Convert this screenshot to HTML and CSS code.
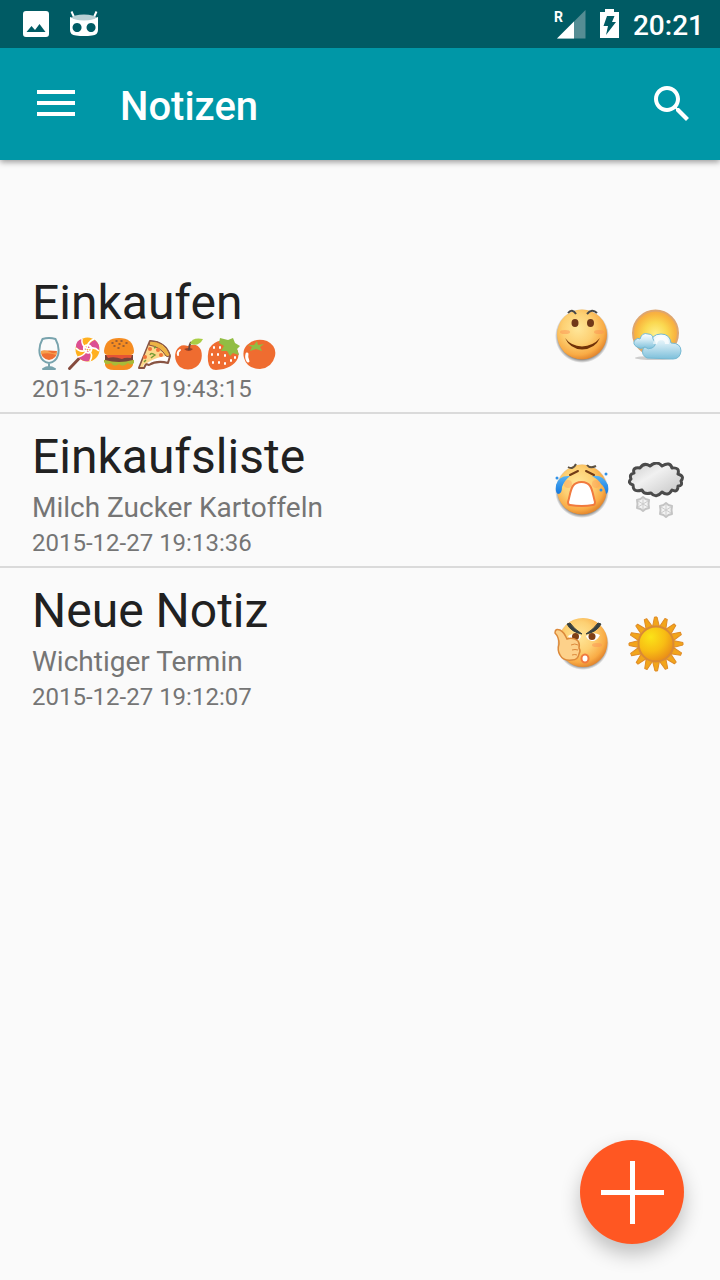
FILE: index.html
```html
<!DOCTYPE html>
<html lang="de">
<head>
  <meta charset="UTF-8" />
  <meta name="viewport" content="width=device-width, initial-scale=1.0" />
  <title>Notizen</title>
  <link rel="stylesheet" href="styles.css">
</head>
<body>
  <!-- gradients shared by the icons -->
  <svg class="defs" width="0" height="0" aria-hidden="true">
    <defs>
      <radialGradient id="face" cx="42%" cy="38%" r="62%">
        <stop offset="0" stop-color="#ffe79a" />
        <stop offset="0.5" stop-color="#fdd073" />
        <stop offset="0.85" stop-color="#f9ab45" />
        <stop offset="1" stop-color="#e58a30" />
      </radialGradient>
      <radialGradient id="softSun" cx="50%" cy="52%" r="52%">
        <stop offset="0" stop-color="#fff08a" />
        <stop offset="0.5" stop-color="#fad850" />
        <stop offset="0.84" stop-color="#f9b53e" />
        <stop offset="1" stop-color="#f3a84c" />
      </radialGradient>
      <radialGradient id="brightSun" cx="35%" cy="30%" r="75%">
        <stop offset="0" stop-color="#fbe318" />
        <stop offset="0.55" stop-color="#f8bd14" />
        <stop offset="1" stop-color="#e98a18" />
      </radialGradient>
      <linearGradient id="cloud" x1="0" y1="0" x2="0" y2="1">
        <stop offset="0" stop-color="#ffffff" />
        <stop offset="0.4" stop-color="#d3ebf5" />
        <stop offset="1" stop-color="#7cbfda" />
      </linearGradient>
      <linearGradient id="greyCloud" x1="0" y1="0" x2="1" y2="1">
        <stop offset="0" stop-color="#cccccc" />
        <stop offset="0.4" stop-color="#f1f1f1" />
        <stop offset="1" stop-color="#c2c2c2" />
      </linearGradient>
      <linearGradient id="tear" x1="0" y1="0" x2="0" y2="1">
        <stop offset="0" stop-color="#55b4f5" />
        <stop offset="1" stop-color="#1578df" />
      </linearGradient>
      <radialGradient id="shade">
        <stop offset="0.85" stop-color="#000" stop-opacity="0.5" />
        <stop offset="1" stop-color="#000" stop-opacity="0" />
      </radialGradient>
      <g id="flake">
        <path d="M0-7 2.500-5 6-4 5.500 0 6 4 2.500 5 0 7-2.500 5-6 4-5.500 0-6-4-2.500-5z" fill="#f2f2f2" stroke="#c4c4c4" stroke-width="2" stroke-linejoin="round" />
        <path d="M0-6V6M-5-3 5 3M5-3-5 3" fill="none" stroke="#cccccc" />
      </g>
      <path id="ray" d="M24.500 11 26.500 1H29L31.500 11z" />
    </defs>
  </svg>

  <header>
    <div class="status">
      <div class="status-group">
        <svg width="26" height="26" viewBox="0 0 26 26"><path fill="#fff" fill-rule="evenodd" d="M3 0H23Q26 0 26 3V23Q26 26 23 26H3Q0 26 0 23V3Q0 0 3 0zM3.500 21H22.500L16.500 13 12 19 8.500 15z" /></svg>
        <svg width="28" height="26" viewBox="0 0 28 26">
          <path d="M1.500.5 4 6M26.500.5 24 6" stroke="#fff" stroke-width="2" />
          <path fill="#fff" fill-rule="evenodd" d="M0 6Q14 12 28 6V19Q28 24 22 24.500Q14 25.500 6 24.500Q0 24 0 19zM7 12a4.500 4.500 0 1 0 .1 0zM21 12a4.500 4.500 0 1 0 .1 0z" />
          <ellipse cx="14" cy="6.500" rx="12" ry="3" fill="#b9d0d4" />
        </svg>
      </div>
      <div class="status-group status-right">
        <svg width="32" height="30" viewBox="0 0 32 30">
          <path d="M31.500 1V29.500H3z" fill="#558d94" />
          <path d="M20 12.500V29.500H3z" fill="#fff" />
          <text class="roaming" x="0" y="13">R</text>
        </svg>
        <svg width="19" height="30" viewBox="0 0 19 30">
          <path d="M5 0H14V3H19V29H0V3H5z" fill="#fff" />
          <path d="M7 7H14.500L12 13H16L6 26 8 17H3.500z" fill="#005b64" />
        </svg>
        <time>20:21</time>
      </div>
    </div>
    <div class="toolbar">
      <button class="icon-button" aria-label="Menü">
        <svg width="48" height="48" viewBox="0 0 48 48"><path d="M5 12H43M5 23H43M5 34H43" stroke="#fff" stroke-width="4" /></svg>
      </button>
      <h1>Notizen</h1>
      <button class="icon-button" aria-label="Suchen">
        <svg width="48" height="48" viewBox="0 0 24 24"><path fill="#fff" d="M15.500 14h-.79l-.28-.27C15.410 12.590 16 11.110 16 9.500 16 5.910 13.090 3 9.500 3S3 5.910 3 9.500 5.910 16 9.500 16c1.610 0 3.090-.59 4.230-1.570l.27.28v.79l5 4.990L20.490 19l-4.990-5zm-6 0C7.010 14 5 11.990 5 9.500S7.010 5 9.500 5 14 7.010 14 9.500 11.990 14 9.500 14z" /></svg>
      </button>
    </div>
  </header>

  <main>
    <ul class="notes">
      <li>
        <a class="note" href="#einkaufen">
          <div class="note-text">
            <h2>Einkaufen</h2>
            <div class="preview emojis">
              <!-- wine glass -->
              <svg viewBox="0 0 35 34">
                <path d="M9 14Q17 13 25 14Q25 22 17 23Q9 22 9 14z" fill="#ef7033" />
                <path d="M9 14Q13 12 18 15T25 14L24 18Q17 15 9 17z" fill="#f7a04e" />
                <path d="M10.500 2Q6 10 8 18Q10 25 17 26Q24 25 26 18Q28 10 23.500 2Q17 0 10.500 2zM17 26V31M11 32Q17 28 23 32z" fill="none" stroke="#78a3ad" stroke-width="2" stroke-linejoin="round" />
              </svg>
              <!-- lollipop -->
              <svg viewBox="0 0 35 34">
                <path d="M2.500 31.500 13 20.500" stroke="#854b3d" stroke-width="3" stroke-linecap="round" />
                <circle cx="20.500" cy="12.500" r="12" fill="#ffb01f" />
                <path d="M20 12Q22 5 28 3Q33 7 32 13Q26 10 20 12zM21 13Q25 18 22 24Q15 25 11 20Q18 19 21 13zM20 13Q13 14 9 10Q9 3 15 2Q15 9 20 13z" fill="#dc4f93" />
                <g fill="none" stroke="#fff" stroke-width="1.500">
                  <path d="M20 12Q20 5 27 2M21 12Q27 9 32 14M21 13Q27 17 23 24M20 13Q17 19 11 20M20 13Q13 16 9 11M20 12Q14 8 15 2" />
                  <path d="M17 13Q16 8 21 8Q26 10 24 14Q22 17 19 15" stroke-width="2" />
                </g>
              </svg>
              <!-- burger -->
              <svg viewBox="0 0 35 34">
                <path d="M3 24H31V28Q29 33 22 33H12Q4 33 3 28z" fill="#f58c21" />
                <path d="M2 23Q17 19 32 23L32 26Q29 29 26 26Q21 31 17 27Q12 31 9 26Q4 29 2 25z" fill="#a9ba38" />
                <path d="M3 18H31V23Q17 27 3 23z" fill="#76443a" />
                <path d="M4 18 30 18 29 21Q23 20 20 22Q12 19 6 21z" fill="#e55435" />
                <path d="M2 14Q3 1 17 1Q31 1 32 14Q32 18 28 18H6Q2 18 2 14z" fill="#f58c21" />
                <path d="M10 6h1M14 4h1M19 4h1M24 6h1M12 9h1M17 7h1M21 9h1M16 11h1" stroke="#80503a" stroke-width="1.500" stroke-linecap="round" />
              </svg>
              <!-- pizza -->
              <svg viewBox="0 0 35 34">
                <path d="M2 31 13 4Q29 5 33 19L31 26Q20 23 12 28L9 27 7 31z" fill="#fff" stroke="#885443" stroke-width="2" stroke-linejoin="round" />
                <path d="M3 30 13 5Q24 8 30 19Q19 20 10 26L7 27 6 30z" fill="#fdd789" />
                <path d="M13 4Q28 4 33 18Q31 21 29 19Q24 10 12 8z" fill="#edb345" stroke="#885443" stroke-width="1" />
                <g fill="#f17339"><circle cx="13" cy="12" r="2" /><circle cx="21" cy="13" r="2" /><circle cx="8" cy="20" r="2" /><circle cx="24" cy="18" r="2" /></g>
                <path d="M13 18Q14 15 18 18Q15 20 14 21M17 11l2-1M7 25l2-2" fill="none" stroke="#769c35" stroke-width="1.500" />
              </svg>
              <!-- apple -->
              <svg viewBox="0 0 35 34">
                <path d="M16 9Q25 5 29 13Q32 24 24 30Q16 35 8 30Q1 23 4 14Q8 6 16 9z" fill="#ef6c30" />
                <path d="M12 12Q17 16 21 12Q17 10 12 12z" fill="#994126" />
                <path d="M17 13Q17 8 19 5" fill="none" stroke="#67473d" stroke-width="2" />
                <path d="M18 7Q20 0 31 2Q27 10 18 7z" fill="#a9ce45" />
                <path d="M8 13Q5 15 6 18" fill="none" stroke="#fff" stroke-width="2" stroke-linecap="round" />
              </svg>
              <!-- strawberry -->
              <svg viewBox="0 0 35 34">
                <path d="M5 8Q13 1 23 5Q34 13 31 21Q26 32 9 33Q2 33 1 24Q0 12 5 8z" fill="#ef6c30" />
                <path d="M13 1 21 3 26 1 28 6 33 9 30 12 32 18 26 16 23 19 20 14 14 14 17 9 12 6z" fill="#91bd43" />
                <path d="M7 10v1M13 10v1M5 17v1M11 17v1M18 18v1M6 25v1M12 25v1M18 26v1M24 23v1M28 20v1" stroke="#fff" stroke-width="2" stroke-linecap="round" />
              </svg>
              <!-- tomato -->
              <svg viewBox="0 0 35 34">
                <path d="M5 8Q14 0 25 4Q35 9 33 19Q30 31 18 32Q5 32 2 21Q0 13 5 8z" fill="#ef6c30" />
                <path d="M6 8 12 8 15 4 16 8 22 7 18 10 20 14 14 12 8 14 10 10z" fill="#91bd43" />
                <path d="M5 17Q4 21 6 24" fill="none" stroke="#fff" stroke-width="3" stroke-linecap="round" />
              </svg>
            </div>
            <time>2015-12-27 19:43:15</time>
          </div>
          <div class="note-icons">
            <!-- smiling face -->
            <svg viewBox="0 0 56 56">
              <circle cx="28" cy="28" r="27" fill="url(#shade)" />
              <circle cx="28" cy="26.500" r="25" fill="url(#face)" />
              <path d="M14 5Q18 0 22 6M33 6Q38 0 43 5" fill="none" stroke="#474747" stroke-width="2" />
              <ellipse cx="21" cy="15" rx="3.500" ry="4" fill="#713818" />
              <ellipse cx="36.500" cy="15" rx="3.500" ry="4" fill="#713818" />
              <ellipse cx="11" cy="24" rx="5" ry="2" fill="#fb9454" opacity=".5" />
              <ellipse cx="45" cy="24" rx="5" ry="2" fill="#fb9454" opacity=".5" />
              <path d="M11 30Q17 38 28 38.500Q39 38 46 30Q41 41 28 41.500Q16 41 11 30z" fill="#713207" />
            </svg>
            <!-- sun behind clouds -->
            <svg viewBox="0 0 56 56">
              <ellipse cx="27" cy="50" rx="20" ry="2" fill="#777" opacity=".35" />
              <circle cx="27.500" cy="25" r="22.500" fill="url(#softSun)" stroke="#dda66f" stroke-width="2" />
              <path d="M19 50Q13 47 15 41Q17 36 22 37Q23 26 33 26Q42 26 43 35Q53 35 53 43Q52 51 45 51z" fill="url(#cloud)" stroke="#75b9d3" stroke-width="1" />
              <path d="M9 39Q4 36 7 32Q10 29 12 31Q14 24 20 26Q25 26 25 31Q30 37 24 40Q20 42 17 39Q13 42 9 39z" fill="url(#cloud)" stroke="#75b9d3" stroke-width="1" />
              <path d="M27 36Q28 30 34 30Q39 31 39 36" fill="none" stroke="#fff" stroke-width="4" opacity=".7" />
            </svg>
          </div>
        </a>
      </li>
      <li>
        <a class="note" href="#einkaufsliste">
          <div class="note-text">
            <h2>Einkaufsliste</h2>
            <p class="preview">Milch Zucker Kartoffeln</p>
            <time>2015-12-27 19:13:36</time>
          </div>
          <div class="note-icons">
            <!-- crying face -->
            <svg viewBox="0 0 56 56">
              <circle cx="28" cy="29" r="27" fill="url(#shade)" />
              <circle cx="28" cy="27.500" r="25" fill="url(#face)" />
              <path d="M14 5Q19 8 22 2M33 3Q36 7 42 4" fill="none" stroke="#5b5144" stroke-width="2" />
              <path d="M16 14Q5 13 2 23Q1 31 4 32Q8 32 8 25Q10 19 16 14zM38 14Q49 12 54 23Q55 31 52 32Q51 25 47 22Q44 17 38 14z" fill="url(#tear)" />
              <path d="M16 13 24 9M32 9 40 13" stroke="#713c16" stroke-width="2" stroke-linecap="round" />
              <g fill="#2f91e8"><circle cx="3" cy="16" r="1.500" /><circle cx="52" cy="12" r="1.500" /><circle cx="47" cy="28" r="1.500" /></g>
              <circle cx="14" cy="22" r="4" fill="#fb9454" opacity=".35" />
              <circle cx="42" cy="22" r="4" fill="#fb9454" opacity=".35" />
              <path d="M16 43Q14 43 14 40C17 31 16 20 27.500 20C39 20 38 31 41 40Q41 43 39 43Q28 45 16 43z" fill="#fff" stroke="#f17a3e" stroke-width="2" />
            </svg>
            <!-- snow cloud -->
            <svg viewBox="0 0 56 56">
              <path d="M6 11Q4 5 12 6Q16 0 22 4Q29-2 34 4Q42-1 44 6Q52 5 50 12Q57 14 53 19Q55 24 50 24Q50 31 44 28Q40 35 34 30Q28 37 23 31Q16 33 14 28Q5 31 5 23Q-1 21 3 17Q1 12 6 11z" fill="url(#greyCloud)" stroke="#4b4b4b" stroke-width="3" stroke-linejoin="round" />
              <use href="#flake" x="15" y="42" />
              <use href="#flake" x="38" y="48" />
            </svg>
          </div>
        </a>
      </li>
      <li>
        <a class="note" href="#neue-notiz">
          <div class="note-text">
            <h2>Neue Notiz</h2>
            <p class="preview">Wichtiger Termin</p>
            <time>2015-12-27 19:12:07</time>
          </div>
          <div class="note-icons">
            <!-- angry face with thumb -->
            <svg viewBox="0 0 56 56">
              <circle cx="29" cy="28" r="26" fill="url(#shade)" />
              <circle cx="29" cy="26.500" r="24.500" fill="url(#face)" />
              <path d="M14 20Q21 15 27 20Q26 25 21 25Q16 25 14 20zM32 20Q39 15 46 19Q43 25 38 25Q33 24 32 20z" fill="#fff" />
              <circle cx="21.500" cy="20.500" r="3.500" fill="#804015" />
              <circle cx="38" cy="20.500" r="3.500" fill="#804015" />
              <path d="M13 8 16 7Q20 13 28 18Q17 16 13 8zM47 8 44 7Q40 13 32 18Q43 16 47 8z" fill="#374040" stroke="#374040" />
              <ellipse cx="43" cy="29" rx="5" ry="2" fill="#fb9454" opacity=".5" />
              <ellipse cx="31" cy="42.500" rx="3.500" ry="4" fill="#fff" stroke="#f17a3e" stroke-width="2" />
              <path d="M5 28Q5 21 1 17Q1 12 6 14Q10 16 13 23Q19 21 24 25Q26 28 25 32Q27 35 25 38Q24 44 18 44Q9 45 6 39Q3 34 5 28z" fill="#fdd18a" stroke="#dc893a" stroke-width="1.500" />
              <path d="M17 29Q21 27 24 29M18 34Q21 33 24 34M18 39Q21 38 23 39" fill="none" stroke="#dc893a" />
            </svg>
            <!-- sun -->
            <svg viewBox="0 0 56 56">
              <g fill="#f2a51b" stroke="#df8b27" stroke-width="1" stroke-linejoin="round">
                <use href="#ray" />
                <use href="#ray" transform="rotate(22.500 28 28)" />
                <use href="#ray" transform="rotate(45 28 28)" />
                <use href="#ray" transform="rotate(67.500 28 28)" />
                <use href="#ray" transform="rotate(90 28 28)" />
                <use href="#ray" transform="rotate(112.500 28 28)" />
                <use href="#ray" transform="rotate(135 28 28)" />
                <use href="#ray" transform="rotate(157.500 28 28)" />
                <use href="#ray" transform="rotate(180 28 28)" />
                <use href="#ray" transform="rotate(202.500 28 28)" />
                <use href="#ray" transform="rotate(225 28 28)" />
                <use href="#ray" transform="rotate(247.500 28 28)" />
                <use href="#ray" transform="rotate(270 28 28)" />
                <use href="#ray" transform="rotate(292.500 28 28)" />
                <use href="#ray" transform="rotate(315 28 28)" />
                <use href="#ray" transform="rotate(337.500 28 28)" />
              </g>
              <circle cx="28" cy="28" r="17.500" fill="url(#brightSun)" stroke="#d98a35" stroke-width="2" />
            </svg>
          </div>
        </a>
      </li>
    </ul>
  </main>

  <button class="fab" aria-label="Neue Notiz">
    <svg width="64" height="64" viewBox="0 0 64 64"><path d="M1 32.500H64M32.500 1V64" stroke="#fff" stroke-width="5" /></svg>
  </button>
</body>
</html>
```

FILE: styles.css
```css
* {
  box-sizing: border-box;
}
body {
  margin: 0;
  min-height: 100vh;
  font-family: Roboto, sans-serif;
  background-color: #fafafa;
  color: #212121;
}
h1, h2, p {
  margin: 0;
}
svg {
  display: block;
}
button {
  padding: 0;
  border: 0;
  background: none;
  cursor: pointer;
}
.defs {
  position: absolute;
}
header {
  color: #fff;
  box-shadow: 0 2px 6px rgba(0, 0, 0, 0.4);
}
.status {
  display: flex;
  align-items: center;
  justify-content: space-between;
  height: 48px;
  padding: 0 16px 0 23px;
  background: #005b64;
}
.status-group {
  display: flex;
  align-items: center;
  gap: 21px;
}
.status-right {
  gap: 14px;
}
.status time {
  font-size: 28px;
  font-weight: 500;
  line-height: 44px;
  padding-top: 4px;
}
.roaming {
  font-size: 14px;
  font-weight: 700;
  fill: #fff;
}
.toolbar {
  display: flex;
  align-items: center;
  height: 112px;
  padding: 0 24px 0 32px;
  background: #0097a7;
}
.toolbar h1 {
  flex: 1;
  padding: 6px 0 0 40px;
  font-size: 40px;
  font-weight: 500;
  line-height: 48px;
}
.notes {
  list-style: none;
  margin: 0;
  padding: 100px 0 0;
}
.notes li + li {
  border-top: 2px solid #dadada;
}
.note {
  display: flex;
  align-items: center;
  justify-content: space-between;
  padding: 9px 36px 9px 32px;
  color: inherit;
  text-decoration: none;
}
.note-text {
  display: flex;
  flex-direction: column;
  padding-top: 6px;
}
.note h2 {
  font-size: 48px;
  font-weight: 400;
  line-height: 56px;
}
.preview {
  margin: 6px 0 4px;
  font-size: 28px;
  line-height: 34px;
  color: #757575;
}
.emojis {
  display: flex;
}
.emojis svg {
  width: 35px;
  height: 34px;
}
.note time {
  font-size: 24px;
  line-height: 28px;
  color: #757575;
}
.note-icons {
  display: flex;
  gap: 18px;
}
.note-icons svg {
  width: 56px;
  height: 56px;
}
.fab {
  position: fixed;
  right: 36px;
  bottom: 36px;
  display: flex;
  align-items: center;
  justify-content: center;
  width: 104px;
  height: 104px;
  border-radius: 50%;
  background: #ff5722;
  box-shadow: 0 10px 20px rgba(0, 0, 0, 0.24);
}
```
